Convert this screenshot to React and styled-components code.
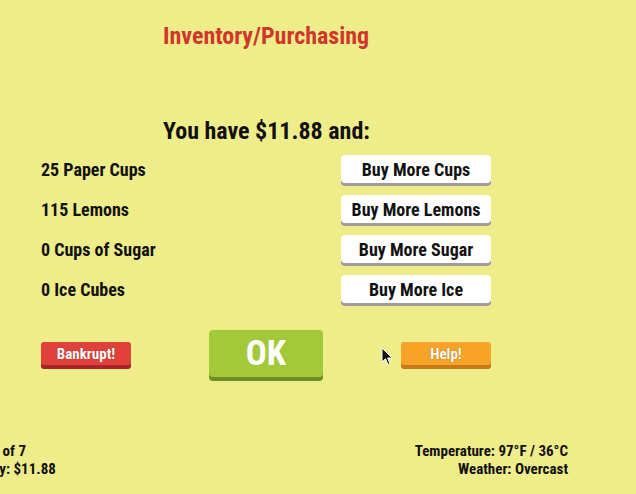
import React from "react";
import styled, { createGlobalStyle } from "styled-components";

const GlobalStyle = createGlobalStyle`
  html, body {
    margin: 0;
    padding: 0;
    background: #efec8a;
  }
  body {
    font-family: "Roboto Condensed", Roboto, "Liberation Sans", sans-serif;
    font-stretch: condensed;
    font-weight: 700;
  }
`;

const stock = [
  { label: "25 Paper Cups", action: "Buy More Cups" },
  { label: "115 Lemons", action: "Buy More Lemons" },
  { label: "0 Cups of Sugar", action: "Buy More Sugar" },
  { label: "0 Ice Cubes", action: "Buy More Ice" },
];

const App = () => {
  return (
    <Screen>
      <GlobalStyle />
      <Panel>
        <Title>Inventory/Purchasing</Title>
        <Funds>You have $11.88 and:</Funds>
        <StockList>
          {stock.map((item) => (
            <StockRow key={item.label}>
              <StockLabel>{item.label}</StockLabel>
              <BuyButton>{item.action}</BuyButton>
            </StockRow>
          ))}
        </StockList>
        <Actions>
          <SmallButton $bg="#e1413b" $edge="#a8262a">
            Bankrupt!
          </SmallButton>
          <OkButton>OK</OkButton>
          <SmallButton $bg="#f6a327" $edge="#c87818">
            Help!
          </SmallButton>
        </Actions>
      </Panel>
      <Status>
        <StatusLeft>
          <div>Day 1 of 7</div>
          <div>Money: $11.88</div>
        </StatusLeft>
        <StatusRight>
          <div>Temperature: 97°F / 36°C</div>
          <div>Weather: Overcast</div>
        </StatusRight>
      </Status>
      <Pointer viewBox="0 0 12 19" width="12" height="19">
        <path
          d="M1 1 L1 15 L4.5 11.8 L7 17.5 L9 16.6 L6.6 11 L11 11 Z"
          fill="#111"
          stroke="#fff"
          strokeWidth="1"
          strokeLinejoin="round"
        />
      </Pointer>
    </Screen>
  );
};

const Screen = styled.div`
  position: relative;
  width: 636px;
  height: 494px;
  overflow: hidden;
  background: #efec8a;
  color: #111;
  display: flex;
  flex-direction: column;
`;

const Panel = styled.div`
  margin-left: 41px;
  width: 450px;
  display: flex;
  flex-direction: column;
`;

const Title = styled.h1`
  margin: 21px 0 0 122px;
  font-size: 24px;
  line-height: 30px;
  color: #d0362b;
  font-weight: 700;
`;

const Funds = styled.h2`
  margin: 65px 0 0 122px;
  font-size: 24px;
  line-height: 30px;
  font-weight: 700;
`;

const StockList = styled.div`
  margin-top: 9px;
  display: flex;
  flex-direction: column;
  gap: 9px;
`;

const StockRow = styled.div`
  display: flex;
  align-items: center;
  justify-content: space-between;
  height: 31px;
`;

const StockLabel = styled.span`
  font-size: 18px;
  margin-top: -3px;
`;

const BuyButton = styled.button`
  align-self: flex-start;
  width: 150px;
  height: 28px;
  border: none;
  border-radius: 4px;
  background: #fff;
  box-shadow: 0 3px 0 #9d9d9d;
  font: inherit;
  font-size: 18px;
  color: #111;
  padding: 0;
  cursor: pointer;
`;

const Actions = styled.div`
  margin-top: 24px;
  display: flex;
  align-items: center;
  justify-content: space-between;
`;

const SmallButton = styled.button`
  width: 90px;
  height: 23px;
  border: none;
  border-radius: 3px;
  padding: 0;
  background: ${(p) => p.$bg};
  box-shadow: 0 4px 0 ${(p) => p.$edge};
  color: #fff;
  font: inherit;
  font-size: 15px;
  text-shadow: 0 0 1px rgba(0, 0, 0, 0.45);
  margin-bottom: 4px;
`;

const OkButton = styled.button`
  width: 114px;
  height: 47px;
  border: none;
  border-radius: 4px;
  padding: 0;
  background: #a2c93a;
  box-shadow: 0 4px 0 #6f8e25;
  color: #fff;
  font: inherit;
  font-size: 35px;
  margin-bottom: 4px;
`;

const Status = styled.div`
  margin-top: auto;
  margin-bottom: 16px;
  display: flex;
  justify-content: space-between;
  font-size: 15px;
  line-height: 18px;
`;

const StatusLeft = styled.div`
  margin-left: -34px;
`;

const StatusRight = styled.div`
  margin-right: 68px;
  text-align: right;
`;

const Pointer = styled.svg`
  position: absolute;
  left: 381px;
  top: 347px;
`;

export default App;
